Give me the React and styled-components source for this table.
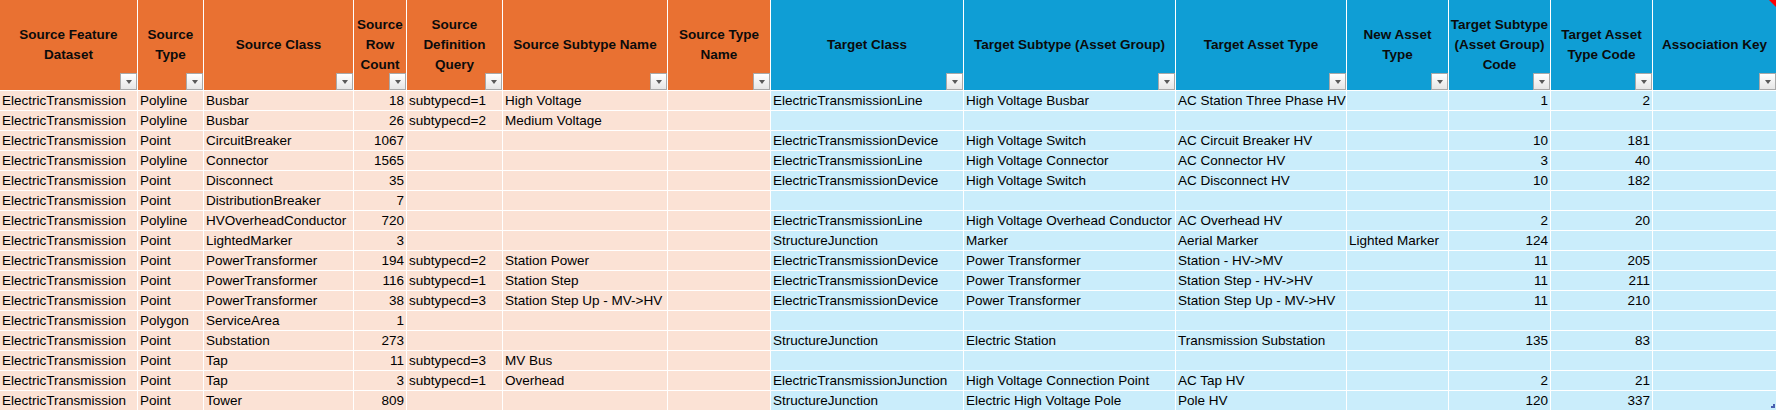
import styled, { createGlobalStyle } from "styled-components";

const GlobalStyle = createGlobalStyle`
  html, body {
    margin: 0;
    padding: 0;
    background: #ffffff;
  }
  body {
    font-family: "Liberation Sans", Arial, sans-serif;
    overflow: hidden;
  }
`;

const ORANGE = "#e97132";
const BLUE = "#0f9ed5";
const ORANGE_LIGHT = "#fbe2d5";
const BLUE_LIGHT = "#caedfb";

const columns = [
  { title: "Source Feature Dataset", width: "137px", side: "source" },
  { title: "Source Type", width: "65px", side: "source" },
  { title: "Source Class", width: "149px", side: "source" },
  { title: "Source Row Count", width: "52px", side: "source", num: true },
  { title: "Source Definition Query", width: "95px", side: "source" },
  { title: "Source Subtype Name", width: "164px", side: "source" },
  { title: "Source Type Name", width: "102px", side: "source" },
  { title: "Target Class", width: "192px", side: "target" },
  { title: "Target Subtype (Asset Group)", width: "211px", side: "target" },
  { title: "Target Asset Type", width: "170px", side: "target" },
  { title: "New Asset Type", width: "101px", side: "target" },
  { title: "Target Subtype (Asset Group) Code", width: "101px", side: "target", num: true },
  { title: "Target Asset Type Code", width: "101px", side: "target", num: true },
  { title: "Association Key", width: "1fr", side: "target", comment: true },
];

const ET = "ElectricTransmission";
const ETD = "ElectricTransmissionDevice";
const ETL = "ElectricTransmissionLine";
const SJ = "StructureJunction";
const PT = "Power Transformer";

const rows = [
  [ET, "Polyline", "Busbar", "18", "subtypecd=1", "High Voltage", "", ETL, "High Voltage Busbar", "AC Station Three Phase HV", "", "1", "2", ""],
  [ET, "Polyline", "Busbar", "26", "subtypecd=2", "Medium Voltage", "", "", "", "", "", "", "", ""],
  [ET, "Point", "CircuitBreaker", "1067", "", "", "", ETD, "High Voltage Switch", "AC Circuit Breaker HV", "", "10", "181", ""],
  [ET, "Polyline", "Connector", "1565", "", "", "", ETL, "High Voltage Connector", "AC Connector HV", "", "3", "40", ""],
  [ET, "Point", "Disconnect", "35", "", "", "", ETD, "High Voltage Switch", "AC Disconnect HV", "", "10", "182", ""],
  [ET, "Point", "DistributionBreaker", "7", "", "", "", "", "", "", "", "", "", ""],
  [ET, "Polyline", "HVOverheadConductor", "720", "", "", "", ETL, "High Voltage Overhead Conductor", "AC Overhead HV", "", "2", "20", ""],
  [ET, "Point", "LightedMarker", "3", "", "", "", SJ, "Marker", "Aerial Marker", "Lighted Marker", "124", "", ""],
  [ET, "Point", "PowerTransformer", "194", "subtypecd=2", "Station Power", "", ETD, PT, "Station - HV->MV", "", "11", "205", ""],
  [ET, "Point", "PowerTransformer", "116", "subtypecd=1", "Station Step", "", ETD, PT, "Station Step - HV->HV", "", "11", "211", ""],
  [ET, "Point", "PowerTransformer", "38", "subtypecd=3", "Station Step Up - MV->HV", "", ETD, PT, "Station Step Up - MV->HV", "", "11", "210", ""],
  [ET, "Polygon", "ServiceArea", "1", "", "", "", "", "", "", "", "", "", ""],
  [ET, "Point", "Substation", "273", "", "", "", SJ, "Electric Station", "Transmission Substation", "", "135", "83", ""],
  [ET, "Point", "Tap", "11", "subtypecd=3", "MV Bus", "", "", "", "", "", "", "", ""],
  [ET, "Point", "Tap", "3", "subtypecd=1", "Overhead", "", "ElectricTransmissionJunction", "High Voltage Connection Point", "AC Tap HV", "", "2", "21", ""],
  [ET, "Point", "Tower", "809", "", "", "", SJ, "Electric High Voltage Pole", "Pole HV", "", "120", "337", ""],
];

const Sheet = styled.div`
  display: grid;
  grid-template-columns: ${(p) => p.$template};
  grid-template-rows: 90px;
  grid-auto-rows: 19px;
  gap: 1px;
  background: #ffffff;
  width: 1776px;
  position: relative;
`;

const HeaderCell = styled.div`
  position: relative;
  display: flex;
  align-items: center;
  justify-content: center;
  text-align: center;
  padding: 0;
  background: ${(p) => (p.$side === "source" ? ORANGE : BLUE)};
  color: #0b0b0b;
  font-weight: 700;
  font-size: 13.5px;
  line-height: 20px;
  overflow: hidden;
`;

const FilterButton = styled.span`
  position: absolute;
  right: 0;
  bottom: 0;
  width: 15px;
  height: 15px;
  border: 1px solid #a9a9a9;
  background: linear-gradient(#ffffff, #e6e6e6);
  display: flex;
  align-items: center;
  justify-content: center;

  &::after {
    content: "";
    width: 0;
    height: 0;
    margin-top: 1px;
    border-left: 3.5px solid transparent;
    border-right: 3.5px solid transparent;
    border-top: 4px solid #595959;
  }
`;

const CommentMark = styled.span`
  position: absolute;
  top: 0;
  right: 0;
  width: 0;
  height: 0;
  border-left: 7px solid transparent;
  border-top: 7px solid #ff0000;
`;

const Cell = styled.div`
  background: ${(p) => (p.$side === "source" ? ORANGE_LIGHT : BLUE_LIGHT)};
  color: #000000;
  font-size: 13.5px;
  line-height: 19px;
  padding: ${(p) => (p.$num ? "0 2px 0 0" : "0 0 0 2px")};
  white-space: nowrap;
  overflow: hidden;
  text-align: ${(p) => (p.$num ? "right" : "left")};
`;

const ResizeHandle = styled.span`
  position: absolute;
  right: 1px;
  bottom: 2px;
  width: 4px;
  height: 4px;
  border-right: 2px solid #4a5fb0;
  border-bottom: 2px solid #4a5fb0;
  box-sizing: border-box;
`;

export default function App() {
  const template = columns.map((c) => c.width).join(" ");
  return (
    <>
      <GlobalStyle />
      <Sheet $template={template}>
        {columns.map((c) => (
          <HeaderCell key={c.title} $side={c.side}>
            {c.title}
            <FilterButton />
            {c.comment && <CommentMark />}
          </HeaderCell>
        ))}
        {rows.map((row, r) =>
          row.map((value, i) => (
            <Cell key={`${r}-${i}`} $side={columns[i].side} $num={columns[i].num}>
              {value}
            </Cell>
          ))
        )}
        <ResizeHandle />
      </Sheet>
    </>
  );
}
